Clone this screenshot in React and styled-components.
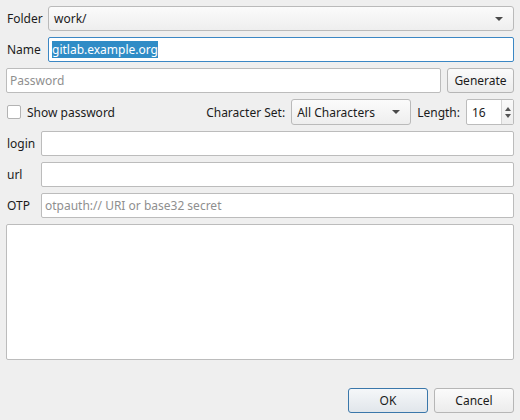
import React from "react";
import styled, { createGlobalStyle } from "styled-components";

const Global = createGlobalStyle`
  html, body { margin: 0; padding: 0; background: #efefef; }
  body { font-family: "Noto Sans", "Open Sans", sans-serif; font-size: 12px; color: #1b1b1b; }
  * { box-sizing: border-box; }
`;

const Dialog = styled.div`
  width: 520px;
  height: 420px;
  padding: 6px 6px 6px 6px;
  display: flex;
  flex-direction: column;
  gap: 6px;
`;

const Form = styled.div`
  display: grid;
  grid-template-columns: ${(p) => p.$labelW}px 1fr;
  column-gap: 8px;
  row-gap: 6px;
  align-items: center;
`;

const Label = styled.label`
  padding-left: 1px;
  line-height: 18px;
  white-space: nowrap;
`;

const LineEdit = styled.input`
  height: 25px;
  width: 100%;
  min-width: 0;
  margin: 0;
  padding: 0 3px;
  font: inherit;
  color: #1b1b1b;
  background: #fff;
  border: 1px solid ${(p) => (p.$focused ? "#3b87c4" : "#bcbcbc")};
  border-radius: 2px;
  outline: none;
  &::placeholder { color: #8f8f8f; }
  &::selection { background: #308cc6; color: #fff; }
`;

const Combo = styled.div`
  height: ${(p) => p.$h || 25}px;
  width: ${(p) => (p.$w ? `${p.$w}px` : "100%")};
  display: flex;
  align-items: center;
  justify-content: space-between;
  padding: 0 10px 0 5px;
  background: linear-gradient(#fbfbfb, #eeeeee);
  border: 1px solid #bababa;
  border-radius: 3px;
  flex-shrink: 0;
`;

const Arrow = styled.span`
  width: 0;
  height: 0;
  border-left: 4px solid transparent;
  border-right: 4px solid transparent;
  border-top: 4px solid #4a4a4a;
`;

const Row = styled.div`
  display: flex;
  align-items: center;
  gap: 6px;
  height: ${(p) => p.$h || 25}px;
`;

const Button = styled.button`
  height: ${(p) => p.$h || 25}px;
  width: ${(p) => (p.$w ? `${p.$w}px` : "auto")};
  padding: 0 6px;
  margin: 0;
  font: inherit;
  color: #1b1b1b;
  border-radius: 3px;
  border: 1px solid ${(p) => (p.$default ? "#3a77aa" : "#b6b6b6")};
  background: ${(p) =>
    p.$default ? "linear-gradient(#f5f7f9, #e1e6eb)" : "linear-gradient(#fbfbfb, #ececec)"};
  flex-shrink: 0;
`;

const CheckLabel = styled.label`
  display: flex;
  align-items: center;
  gap: 6px;
  padding-left: 1px;
`;

const CheckBox = styled.span`
  width: 14px;
  height: 14px;
  background: #fff;
  border: 1px solid #b3b3b3;
  border-radius: 2px;
`;

const Spacer = styled.div`
  flex: 1;
`;

const Spin = styled.div`
  width: 48px;
  height: 26px;
  display: flex;
  background: #fff;
  border: 1px solid #bcbcbc;
  border-radius: 2px;
  flex-shrink: 0;
`;

const SpinValue = styled.div`
  flex: 1;
  display: flex;
  align-items: center;
  padding-left: 5px;
`;

const SpinArrows = styled.div`
  width: 12px;
  border-left: 1px solid #d4d4d4;
  display: flex;
  flex-direction: column;
  align-items: center;
  justify-content: center;
  gap: 3px;
  background: linear-gradient(#fafafa, #eeeeee);
`;

const Tri = styled.span`
  width: 0;
  height: 0;
  border-left: 3.5px solid transparent;
  border-right: 3.5px solid transparent;
  ${(p) => (p.$up ? "border-bottom: 4px solid #555;" : "border-top: 4px solid #555;")}
`;

const Notes = styled.textarea`
  height: 136px;
  width: 100%;
  margin: 0;
  resize: none;
  font: inherit;
  background: #fff;
  border: 1px solid #bcbcbc;
  border-radius: 2px;
  outline: none;
  flex-shrink: 0;
`;

const Buttons = styled.div`
  margin-top: auto;
  display: flex;
  justify-content: flex-end;
  gap: 6px;
  padding-bottom: 1px;
`;

export default function App() {
  const nameRef = React.useRef(null);
  React.useEffect(() => {
    if (nameRef.current) {
      nameRef.current.focus();
      nameRef.current.select();
    }
  }, []);
  return (
    <Dialog>
      <Global />
      <Form $labelW={34}>
        <Label>Folder</Label>
        <Combo>
          <span>work/</span>
          <Arrow />
        </Combo>
        <Label>Name</Label>
        <LineEdit ref={nameRef} $focused defaultValue="gitlab.example.org" />
      </Form>
      <Row>
        <LineEdit placeholder="Password" />
        <Button $w={67}>Generate</Button>
      </Row>
      <Row $h={26}>
        <CheckLabel>
          <CheckBox />
          Show password
        </CheckLabel>
        <Spacer />
        <span>Character Set:</span>
        <Combo $w={120} $h={26}>
          <span>All Characters</span>
          <Arrow />
        </Combo>
        <span>Length:</span>
        <Spin>
          <SpinValue>16</SpinValue>
          <SpinArrows>
            <Tri $up />
            <Tri />
          </SpinArrows>
        </Spin>
      </Row>
      <Form $labelW={27}>
        <Label>login</Label>
        <LineEdit />
        <Label>url</Label>
        <LineEdit />
        <Label>OTP</Label>
        <LineEdit placeholder="otpauth:// URI or base32 secret" />
      </Form>
      <Notes />
      <Buttons>
        <Button $default $w={80}>OK</Button>
        <Button $w={80}>Cancel</Button>
      </Buttons>
    </Dialog>
  );
}
